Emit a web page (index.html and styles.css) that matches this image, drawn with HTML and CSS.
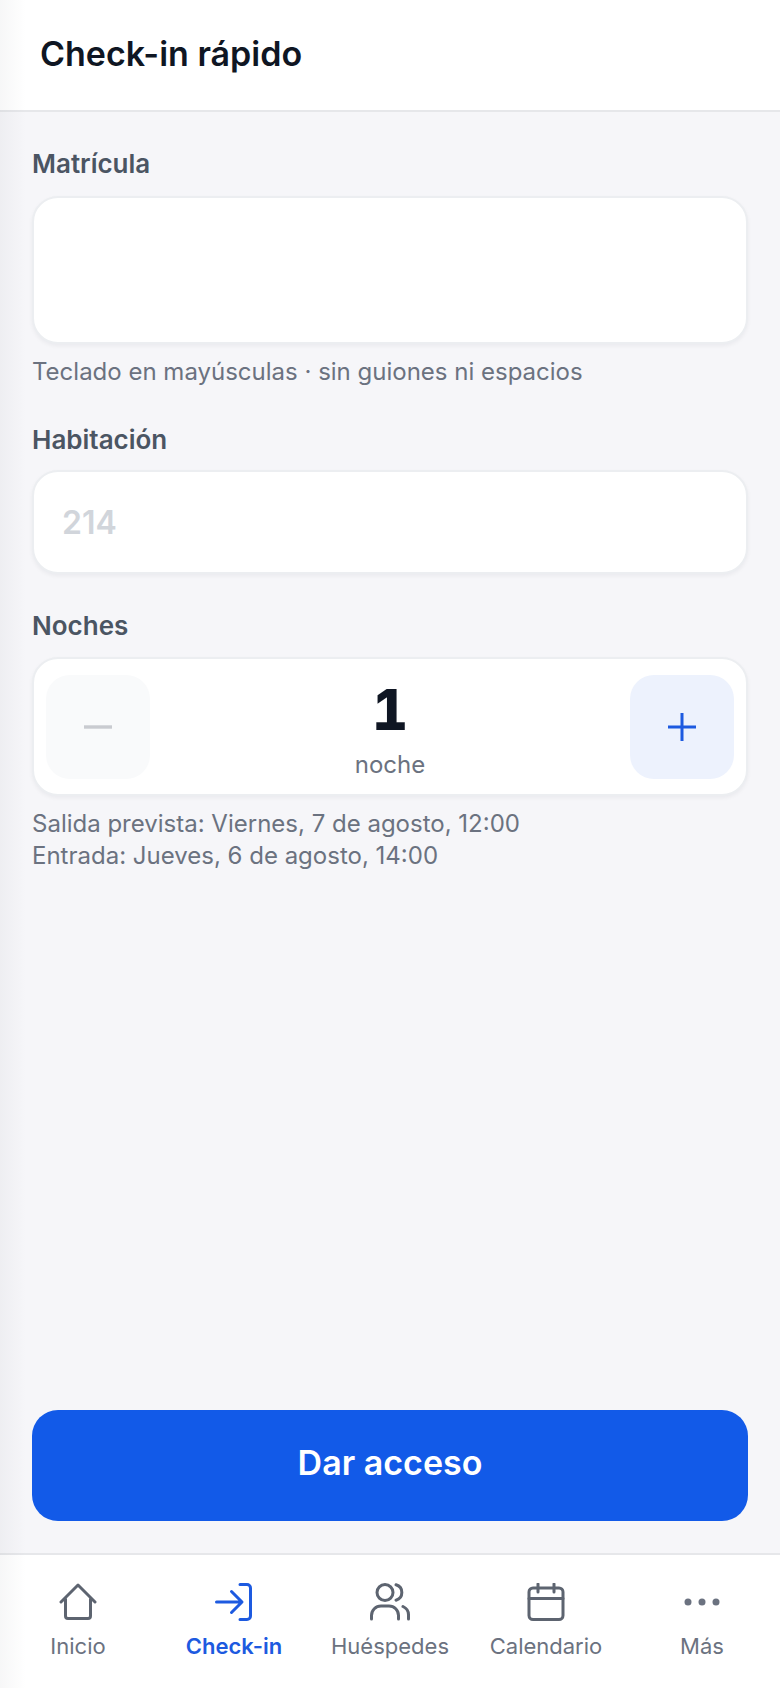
FILE: index.html
```html
<!DOCTYPE html>
<html lang="es">
<head>
    <meta charset="UTF-8">
    <meta name="viewport" content="width=device-width, initial-scale=1.0">
    <title>Check-in rápido</title>
    <link rel="stylesheet" href="styles.css">
</head>
<body>
    <div class="app">
        <header class="topbar">
            <h1>Check-in rápido</h1>
        </header>
        <main class="content">
            <label class="label">Matrícula</label>
            <div class="field field-plate"></div>
            <p class="hint">Teclado en mayúsculas · sin guiones ni espacios</p>

            <label class="label label-room">Habitación</label>
            <div class="field field-room"><span class="placeholder">214</span></div>

            <label class="label label-nights">Noches</label>
            <div class="stepper">
                <div class="step step-off">
                    <svg width="32" height="32" viewBox="0 0 32 32"><path d="M2 16h28" stroke="#c9cbd0" stroke-width="3.4"/></svg>
                </div>
                <div class="count">
                    <div class="count-num">1</div>
                    <div class="count-unit">noche</div>
                </div>
                <div class="step step-on">
                    <svg width="32" height="32" viewBox="0 0 32 32"><path d="M2 16h28M16 2v28" stroke="#1d5ae0" stroke-width="3"/></svg>
                </div>
            </div>
            <p class="dates">Salida prevista: Viernes, 7 de agosto, 12:00<br>Entrada: Jueves, 6 de agosto, 14:00</p>

            <button class="submit">Dar acceso</button>
        </main>
        <nav class="tabs">
            <div class="tab">
                <svg viewBox="0 0 38 38" width="38" height="38"><path d="M2 19 19 2l17 17M6.500 16v17a2.500 2.500 0 0 0 2.500 2.500h20a2.500 2.500 0 0 0 2.500-2.500V16"/></svg>
                <span>Inicio</span>
            </div>
            <div class="tab active">
                <svg viewBox="0 0 38 38" width="38" height="38"><path d="M25 1.500h7a3.500 3.500 0 0 1 3.500 3.500v28a3.500 3.500 0 0 1-3.500 3.500h-7M1.500 19h25M16.500 8.500 27 19 16.500 29.500"/></svg>
                <span>Check-in</span>
            </div>
            <div class="tab">
                <svg viewBox="0 0 40 38" width="40" height="38"><circle cx="15" cy="9.500" r="8"/><path d="M1.500 36v-3.500a9.500 9.500 0 0 1 9.500-9.500h8a9.500 9.500 0 0 1 9.500 9.500V36M26 1.800a8 8 0 0 1 0 15.400M33 23.500a9.500 9.500 0 0 1 5.500 9V36"/></svg>
                <span>Huéspedes</span>
            </div>
            <div class="tab">
                <svg viewBox="0 0 38 38" width="38" height="38"><rect x="2" y="5" width="34" height="31.500" rx="4"/><path d="M2 15.500h34M11 1v8M27 1v8"/></svg>
                <span>Calendario</span>
            </div>
            <div class="tab">
                <svg viewBox="0 0 38 38" width="38" height="38"><g class="dots"><circle cx="5" cy="19" r="3.500"/><circle cx="19" cy="19" r="3.500"/><circle cx="33" cy="19" r="3.500"/></g></svg>
                <span>Más</span>
            </div>
        </nav>
        <div class="edge"></div>
    </div>
</body>
</html>
```

FILE: styles.css
```css
* { box-sizing: border-box; }
html, body { margin: 0; padding: 0; }
body { font-family: Inter, "Noto Sans", sans-serif; background: #f6f6f9; color: #0f1623; }

.app { position: relative; width: 780px; height: 1688px; display: flex; flex-direction: column; overflow: hidden; }
.edge { position: absolute; left: 0; top: 0; bottom: 0; width: 26px; background: linear-gradient(to right, rgba(17, 24, 39, 0.035), rgba(17, 24, 39, 0)); pointer-events: none; }

.topbar { height: 112px; padding: 0 40px; display: flex; align-items: center; background: #fff; border-bottom: 2px solid #e6e7ea; }
.topbar h1 { margin: 0; font-size: 34px; font-weight: 600; position: relative; top: -2px; }

.content { flex: 1; padding: 37px 32px 32px; display: flex; flex-direction: column; }
.label { font-size: 26px; line-height: 30px; font-weight: 600; color: #4b5563; }
.label-room { margin-top: 37px; }
.label-nights { margin-top: 37px; }

.field { margin-top: 17px; background: #fff; border: 2px solid #eceef1; border-radius: 26px; box-shadow: 0 2px 4px rgba(17, 24, 39, 0.05); }
.field-plate { height: 148px; }
.field-room { height: 104px; margin-top: 15px; padding: 0 28px; display: flex; align-items: center; }
.placeholder { font-size: 32px; font-weight: 600; color: #d1d5db; }

.hint { margin: 12px 0 0; font-size: 24px; line-height: 32px; color: #6b7280; }
.dates { margin: 12px 0 0; font-size: 24px; line-height: 32px; color: #6b7280; }

.stepper { margin-top: 16px; height: 139px; padding: 0 12px; display: flex; align-items: center; justify-content: space-between; background: #fff; border: 2px solid #eceef1; border-radius: 26px; box-shadow: 0 2px 4px rgba(17, 24, 39, 0.05); }
.step { width: 104px; height: 104px; border-radius: 24px; display: flex; align-items: center; justify-content: center; }
.step-off { background: #f9fafb; }
.step-on { background: #edf2fd; }
.count { text-align: center; padding-top: 5px; }
.count-num { font-size: 56px; line-height: 64px; font-weight: 800; font-variant-numeric: tabular-nums; }
.count-unit { margin-top: 8px; font-size: 24px; line-height: 30px; color: #6b7280; }

.submit { margin-top: auto; height: 111px; padding: 0 0 6px; border: 0; border-radius: 26px; background: #125ae8; color: #fff; font-family: inherit; font-size: 34px; font-weight: 600; }

.tabs { height: 135px; display: flex; padding-top: 28px; background: #fff; border-top: 2px solid #e6e7ea; }
.tab { flex: 1; display: flex; flex-direction: column; align-items: center; font-size: 22px; line-height: 28px; color: #6b7280; }
.tab svg { fill: none; stroke: #5d6470; stroke-width: 3; stroke-linecap: round; stroke-linejoin: round; }
.tab span { margin-top: 11px; }
.tab .dots { fill: #6b7280; stroke: none; }
.tab.active { color: #1d5ae0; font-weight: 600; }
.tab.active svg { stroke: #1d5ae0; }
```
